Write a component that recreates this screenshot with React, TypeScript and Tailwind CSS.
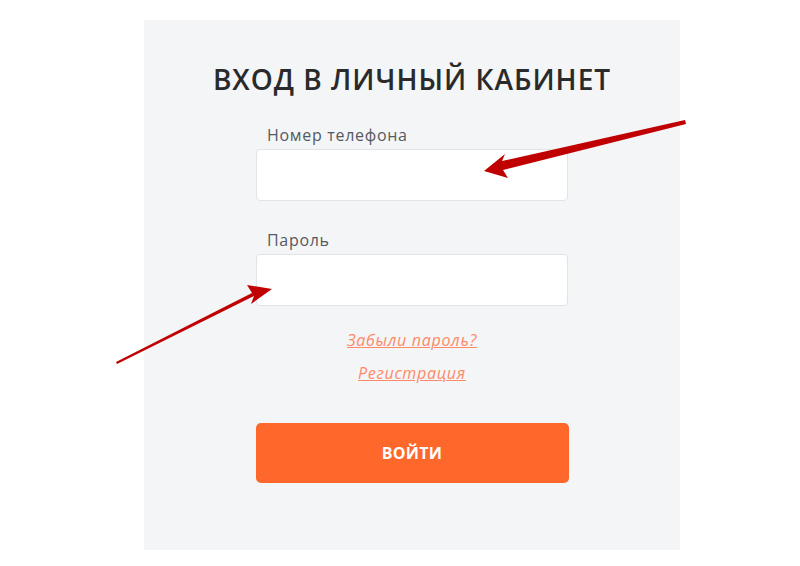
import React from "react";

export default function App() {
  return (
    <div className="relative w-[800px] h-[566px] bg-white overflow-hidden" style={{ fontFamily: '"Open Sans", "Liberation Sans", sans-serif' }}>
      <div className="ml-[144px] mt-[20px] w-[536px] h-[530px] bg-[#f4f5f7] flex flex-col items-center">
        <h1 className="mt-[41px] text-[28px] leading-[36px] font-semibold text-[#2a2a2a] tracking-[1px]">ВХОД В ЛИЧНЫЙ КАБИНЕТ</h1>
        <div className="mt-[28px] w-[312px] flex flex-col">
          <label className="pl-[11px] text-[16px] leading-[20px] text-[#555a60] tracking-[0.7px]">Номер телефона</label>
          <div className="mt-[4px] h-[52px] bg-white border border-[#e3e4e6] rounded-[4px]" />
          <label className="mt-[29px] pl-[11px] text-[16px] leading-[20px] text-[#555a60] tracking-[0.7px]">Пароль</label>
          <div className="mt-[4px] h-[52px] bg-white border border-[#e3e4e6] rounded-[4px]" />
        </div>
        <a className="mt-[23px] text-[16px] leading-[22px] italic underline text-[#ff8a68] tracking-[0.7px]">Забыли пароль?</a>
        <a className="mt-[11px] text-[16px] leading-[22px] italic underline text-[#ff8a68] tracking-[0.7px]">Регистрация</a>
        <button className="mt-[39px] w-[313px] h-[60px] rounded-[5px] bg-[#ff672b] text-white font-bold text-[16px] tracking-[0.3px]">ВОЙТИ</button>
      </div>
      <svg className="absolute left-0 top-0 pointer-events-none" width="800" height="566" viewBox="0 0 800 566">
        <path d="M685 120 L502 161 L505 154 L484 171 L508 178 L503 170 L686 124 Z" fill="#c00000" />
        <path d="M117 364 L254 296 L251 304 L272 289 L247 285 L252 293 L116 362 Z" fill="#c00000" />
      </svg>
    </div>
  );
}
